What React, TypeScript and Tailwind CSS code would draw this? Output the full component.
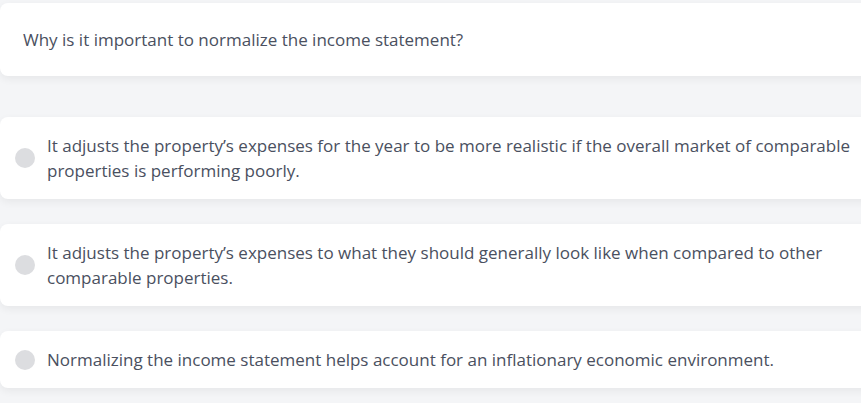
const options = [
  "It adjusts the property\u2019s expenses for the year to be more realistic if the overall market of comparable properties is performing poorly.",
  "It adjusts the property\u2019s expenses to what they should generally look like when compared to other comparable properties.",
  "Normalizing the income statement helps account for an inflationary economic environment.",
];

export default function App() {
  return (
    <div
      className="h-[403px] w-[861px] overflow-hidden bg-[#f4f5f7] text-[#4a5060]"
      style={{ fontFamily: '"Open Sans", "Noto Sans", sans-serif' }}
    >
      <div className="w-[880px] pt-[3px]">
        <div className="rounded-lg bg-white py-6 pl-[23px] pr-4 text-[17px] leading-[25px] shadow-[0_3px_8px_rgba(0,0,0,0.06)]">
          Why is it important to normalize the income statement?
        </div>
        <div className="mt-[41px] flex flex-col gap-[25px]">
          {options.map((o) => (
            <label
              key={o}
              className="flex cursor-pointer items-center rounded-lg bg-white py-4 pl-[15px] pr-4 text-[17px] leading-[25px] shadow-[0_3px_8px_rgba(0,0,0,0.06)]"
            >
              <span className="mr-3 h-5 w-5 shrink-0 rounded-full bg-[#dcdde0]" />
              <span>{o}</span>
            </label>
          ))}
        </div>
      </div>
    </div>
  );
}
